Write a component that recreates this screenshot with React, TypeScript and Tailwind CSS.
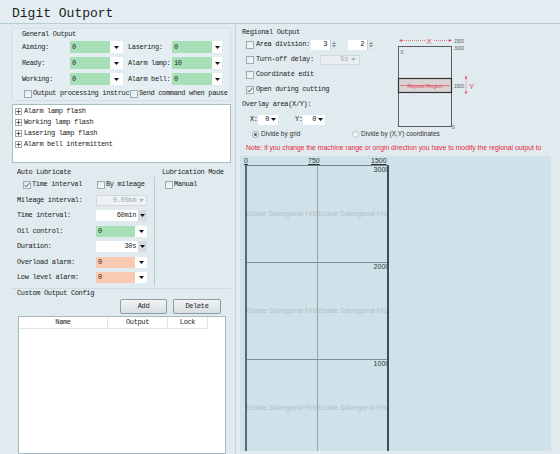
import React from "react";

function Caret({ gray = false }: { gray?: boolean }) {
  return (
    <svg width="5" height="3" viewBox="0 0 5 3" className="shrink-0">
      <path d="M0 0H5L2.5 3Z" fill={gray ? "#a9b4b8" : "#111"} />
    </svg>
  );
}

function Check({ checked = false }: { checked?: boolean }) {
  return (
    <span className="flex h-[8px] w-[8px] shrink-0 items-center justify-center border border-[#9aabb3] bg-linear-to-br from-[#e3e8ea] to-[#fafbfb]">
      {checked && (
        <svg width="6" height="6" viewBox="0 0 6 6">
          <path d="M0.8 3.2L2.3 4.9L5.3 0.9" fill="none" stroke="#46565c" strokeWidth="1" />
        </svg>
      )}
    </span>
  );
}

function Combo({ value, outer, fill }: { value: string; outer: string; fill: string }) {
  return (
    <div className={`flex h-[12px] items-stretch bg-white ${outer}`}>
      <div className={`flex items-center pl-[2px] ${fill}`}>{value}</div>
      <div className="flex flex-1 items-center justify-center">
        <Caret />
      </div>
    </div>
  );
}

function Spin() {
  return (
    <div className="flex h-[10px] w-[7px] flex-col items-center justify-center gap-[1px] border-l border-[#c3cdd1] bg-[#dfe6e9]">
      <svg width="4" height="2" viewBox="0 0 4 2">
        <path d="M0 2H4L2 0Z" fill="#7d8a90" />
      </svg>
      <svg width="4" height="2" viewBox="0 0 4 2">
        <path d="M0 0H4L2 2Z" fill="#7d8a90" />
      </svg>
    </div>
  );
}

function Plus() {
  return (
    <span className="flex h-[7px] w-[7px] shrink-0 items-center justify-center border border-[#9aa9b0] bg-white">
      <svg width="5" height="5" viewBox="0 0 5 5">
        <path d="M0.5 2.5H4.5M2.5 0.5V4.5" stroke="#555" strokeWidth="1" />
      </svg>
    </span>
  );
}

function GeneralRow({ a, av, b, bv }: { a: string; av: string; b: string; bv: string }) {
  return (
    <div className="flex h-[16px] items-center">
      <span className="w-[48px]">{a}</span>
      <Combo value={av} outer="w-[53px]" fill="w-[40px] bg-[#a7dfb6]" />
      <span className="ml-[5px] w-[44px]">{b}</span>
      <Combo value={bv} outer="w-[50px]" fill="w-[40px] bg-[#a7dfb6]" />
    </div>
  );
}

function LubeRow({ label, children }: { label: string; children: React.ReactNode }) {
  return (
    <div className="flex h-[15.5px] items-center pl-[5px]">
      <span className="w-[79px]">{label}</span>
      {children}
    </div>
  );
}

function SpinInput({ value }: { value: string }) {
  return (
    <div className="flex h-[11px] w-[51px] items-stretch bg-white">
      <div className="flex flex-1 items-center justify-end pr-[2px]">{value}</div>
      <div className="flex w-[9px] items-center justify-center bg-[#d5dcdf]">
        <Caret />
      </div>
    </div>
  );
}

function FillInput({ fill }: { fill: string }) {
  return (
    <div className="flex h-[11px] w-[51px] items-stretch bg-white">
      <div className={`flex w-[39px] items-center pl-[2px] ${fill}`}>0</div>
      <div className="flex flex-1 items-center justify-center">
        <Caret />
      </div>
    </div>
  );
}

function Left() {
  return (
    <div className="flex w-[236px] shrink-0 flex-col border-r border-[#c4d4da] pl-[12px] pr-[4px]">
      {/* General Output */}
      <div className="mt-[4px] flex flex-col border border-[#d3e0e5] bg-[#e4edf1] pl-[9px]">
        <div className="flex h-[10px] items-center">General Output</div>
        <GeneralRow a="Aiming:" av="0" b="Lasering:" bv="0" />
        <GeneralRow a="Ready:" av="0" b="Alarm lamp:" bv="10" />
        <GeneralRow a="Working:" av="0" b="Alarm bell:" bv="0" />
        <div className="flex h-[13px] items-center">
          <span className="ml-[2px]">
            <Check />
          </span>
          <span className="ml-[1px] w-[97px] overflow-hidden whitespace-nowrap">Output processing instruc</span>
          <Check />
          <span className="ml-[1px] whitespace-nowrap">Send command when pause</span>
        </div>
      </div>

      {/* Flash options */}
      <div className="mt-[3px] flex h-[59px] shrink-0 flex-col border border-[#a8bac2] bg-white pl-[2px] pt-[1px]">
        {["Alarm lamp flash", "Working lamp flash", "Lasering lamp flash", "Alarm bell intermittent"].map((t) => (
          <div key={t} className="flex h-[11px] items-center">
            <Plus />
            <span className="ml-[2px]">{t}</span>
          </div>
        ))}
      </div>

      {/* Auto Lubricate */}
      <div className="flex pb-[2px]">
        <div className="flex w-[142px] shrink-0 flex-col">
          <div className="mt-[4px] flex h-[10px] items-center pl-[5px]">Auto Lubricate</div>
          <div className="flex h-[15.5px] items-center pl-[11px]">
            <Check checked />
            <span className="ml-[1px] w-[65px]">Time interval</span>
            <Check />
            <span className="ml-[1px]">By mileage</span>
          </div>
          <LubeRow label="Mileage interval:">
            <div className="flex h-[11px] w-[51px] items-center justify-end gap-[3px] border border-[#d0d9dc] bg-[#eef2f3] pr-[2px] text-[#a3adb1]">
              0.00km
              <Caret gray />
            </div>
          </LubeRow>
          <LubeRow label="Time interval:">
            <SpinInput value="60min" />
          </LubeRow>
          <LubeRow label="Oil control:">
            <FillInput fill="bg-[#a7dfb6]" />
          </LubeRow>
          <LubeRow label="Duration:">
            <SpinInput value="30s" />
          </LubeRow>
          <LubeRow label="Overload alarm:">
            <FillInput fill="bg-[#f9c9b2]" />
          </LubeRow>
          <LubeRow label="Low level alarm:">
            <FillInput fill="bg-[#f9c9b2]" />
          </LubeRow>
        </div>
        <div className="flex flex-1 flex-col">
          <div className="mt-[4px] flex h-[10px] items-center pl-[8px] whitespace-nowrap">Lubrication Mode</div>
          <div className="flex-1 border-l border-[#b9cad1]">
            <div className="flex h-[15.5px] items-center pl-[10px]">
              <Check />
              <span className="ml-[1px]">Manual</span>
            </div>
          </div>
        </div>
      </div>

      {/* Custom Output Config */}
      <div className="flex min-h-0 flex-1 flex-col border-t border-[#cddbe0]">
        <div className="flex h-[10px] items-center pl-[5px]">Custom Output Config</div>
        <div className="flex h-[16px] items-center">
          <button className="ml-[108px] flex h-[15px] w-[47px] items-center justify-center rounded-[2px] border border-[#8e9ca3] bg-linear-to-b from-[#f2f4f5] to-[#d8dee1]">
            Add
          </button>
          <button className="ml-[6px] flex h-[15px] w-[48px] items-center justify-center rounded-[2px] border border-[#8e9ca3] bg-linear-to-b from-[#f2f4f5] to-[#d8dee1]">
            Delete
          </button>
        </div>
        <div className="ml-[6px] mt-[1px] w-[208px] flex-1 border border-[#a8b8bf] bg-white">
          <div className="flex h-[12px]">
            <div className="flex w-[89px] items-center justify-center border-b border-r border-[#e0e4e6]">Name</div>
            <div className="flex w-[60px] items-center justify-center border-b border-r border-[#e0e4e6]">Output</div>
            <div className="flex w-[40px] items-center justify-center border-b border-r border-[#e0e4e6]">Lock</div>
          </div>
        </div>
      </div>
    </div>
  );
}

function Diagram() {
  const red = "#e25566";
  return (
    <svg width="100" height="100" viewBox="0 0 100 100" className="shrink-0 overflow-visible" fontFamily="'Liberation Sans', Arial, sans-serif">
      {/* X span */}
      <line x1="10" y1="13.5" x2="61" y2="13.5" stroke={red} strokeWidth="0.8" strokeDasharray="1 1" />
      <path d="M9 13.5L12 12V15Z" fill={red} />
      <path d="M62 13.5L59 12V15Z" fill={red} />
      <rect x="35" y="9" width="8" height="9" fill="#e1ebef" />
      <text x="39" y="16.5" fontSize="8" fill={red} textAnchor="middle">X</text>
      <text x="64" y="15.5" fontSize="5" fill="#666">1500</text>
      <text x="64" y="22.5" fontSize="5" fill="#666">3000</text>
      {/* machine range */}
      <rect x="8.5" y="19.5" width="53" height="80" fill="none" stroke="#5a5f61" strokeWidth="1" />
      <text x="10.5" y="27" fontSize="5" fill="#555">0</text>
      {/* repeat band */}
      <rect x="8.5" y="51.5" width="53" height="14" fill="#d9d3d5" stroke="#333" strokeWidth="1.2" />
      <text x="35" y="60.6" fontSize="6" fill={red} textAnchor="middle">Repeat Region</text>
      <line x1="10" y1="58.5" x2="60" y2="58.5" stroke={red} strokeWidth="0.7" />
      <text x="64" y="60.5" fontSize="5" fill="#666">1500</text>
      {/* Y span */}
      <line x1="76" y1="50" x2="76" y2="66" stroke={red} strokeWidth="0.8" strokeDasharray="1 1" />
      <path d="M76 48.5L74.5 51.5H77.5Z" fill={red} />
      <path d="M76 67.5L74.5 64.5H77.5Z" fill={red} />
      <text x="79" y="62" fontSize="8" fill={red}>Y</text>
      <text x="62" y="102" fontSize="5" fill="#555">0</text>
    </svg>
  );
}

function GridRow({ label }: { label: string }) {
  return (
    <div className="flex h-[97px] shrink-0 border-b border-[#7e8f95]">
      <div className="flex w-[71px] shrink-0 items-center justify-center border-r border-[#96a5aa]">
        <span className="whitespace-nowrap text-[6.5px] text-[#b2c0c5]">Enable Subregional First</span>
      </div>
      <div className="relative flex flex-1 items-center justify-center">
        <span className="whitespace-nowrap text-[6.5px] text-[#b2c0c5]">Enable Subregional First</span>
        <span className="absolute right-0 top-0 text-[7px] text-[#2c3538]">{label}</span>
      </div>
    </div>
  );
}

function Right() {
  return (
    <div className="flex min-w-0 flex-1 flex-col pl-[4px]">
      <div className="mt-[3px] flex">
        <div className="flex w-[150px] shrink-0 flex-col">
          <div className="flex h-[10px] items-center pl-[2px]">Regional Output</div>
          <div className="flex h-[15px] items-center pl-[6px]">
            <Check />
            <span className="ml-[2px] w-[55px] whitespace-nowrap">Area division:</span>
            <div className="flex h-[10px] items-stretch bg-white">
              <div className="flex w-[19px] items-center justify-end pr-[3px]">3</div>
              <Spin />
            </div>
            <div className="ml-[11px] flex h-[10px] items-stretch bg-white">
              <div className="flex w-[19px] items-center justify-end pr-[3px]">2</div>
              <Spin />
            </div>
          </div>
          <div className="flex h-[15px] items-center pl-[6px]">
            <Check />
            <span className="ml-[2px] w-[64px] whitespace-nowrap">Turn-off delay:</span>
            <div className="flex h-[10px] w-[40px] items-center justify-end gap-[3px] border border-[#d0d9dc] bg-[#e9eef0] pr-[3px] text-[#a3adb1]">
              5s
              <Caret gray />
            </div>
          </div>
          <div className="flex h-[15px] items-center pl-[6px]">
            <Check />
            <span className="ml-[2px]">Coordinate edit</span>
          </div>
          <div className="flex h-[15px] items-center pl-[6px]">
            <Check checked />
            <span className="ml-[2px]">Open during cutting</span>
          </div>
          <div className="flex h-[15px] items-center pl-[2px]">Overlay area(X/Y):</div>
          <div className="flex h-[15px] items-center pl-[10px]">
            <span className="w-[8px]">X:</span>
            <div className="flex h-[10px] w-[20px] items-center justify-end gap-[2px] bg-white pr-[2px]">
              0
              <Caret />
            </div>
            <span className="ml-[17px] w-[8px]">Y:</span>
            <div className="flex h-[10px] w-[22px] items-center justify-end gap-[2px] bg-white pr-[2px]">
              0
              <Caret />
            </div>
          </div>
        </div>
        <Diagram />
      </div>

      <div className="flex h-[15px] items-center pl-[12px] font-['Liberation_Sans',Arial,sans-serif] text-[6.5px] tracking-normal text-[#333]">
        <div className="flex w-[100px] items-center">
          <span className="flex h-[7px] w-[7px] items-center justify-center rounded-full border border-[#8d9ca3] bg-white">
            <span className="h-[3px] w-[3px] rounded-full bg-[#4f5f68]" />
          </span>
          <span className="ml-[2px]">Divide by grid</span>
        </div>
        <span className="h-[7px] w-[7px] rounded-full border border-[#b4c1c6] bg-[#f3f6f7]" />
        <span className="ml-[2px]">Divide by (X,Y) coordinates</span>
      </div>

      <div className="flex h-[12px] w-[316px] items-center overflow-hidden whitespace-nowrap pl-[6px] font-['Liberation_Sans',Arial,sans-serif] text-[6.8px] tracking-normal text-[#e5263b]">
        Note: if you change the machine range or origin direction you have to modify the regional output to
      </div>

      <div className="mb-[3px] mt-[2px] flex w-[311px] min-h-0 flex-1 flex-col bg-[#d0e2e9] font-['Liberation_Sans',Arial,sans-serif] tracking-normal">
        <div className="relative h-[9px] shrink-0 text-[7px] text-[#2c3538]">
          <span className="absolute left-[4px] top-[1px] underline">0</span>
          <span className="absolute left-[68px] top-[1px] underline">750</span>
          <span className="absolute left-[131px] top-[1px] underline">1500</span>
        </div>
        <div className="ml-[5px] w-[144px] flex-1 overflow-hidden border-l-2 border-r-2 border-t border-l-[#5b6c71] border-r-[#3e4e53] border-t-[#6f8187]">
          <GridRow label="3000" />
          <GridRow label="2000" />
          <GridRow label="1000" />
        </div>
      </div>
    </div>
  );
}

export default function App() {
  return (
    <div className="flex h-[454px] w-[560px] flex-col overflow-hidden bg-[#e1ebef] font-['Liberation_Mono',monospace] text-[7px] leading-none tracking-[-0.35px] text-[#1d1d1d]">
      <div className="flex h-[24px] shrink-0 items-center border-b border-[#b9ccd4] bg-[#e4eef2] pl-[12px] pt-[3px] text-[13px] tracking-normal text-[#1a1a1a]">
        Digit Outport
      </div>
      <div className="flex min-h-0 flex-1">
        <Left />
        <Right />
      </div>
    </div>
  );
}
